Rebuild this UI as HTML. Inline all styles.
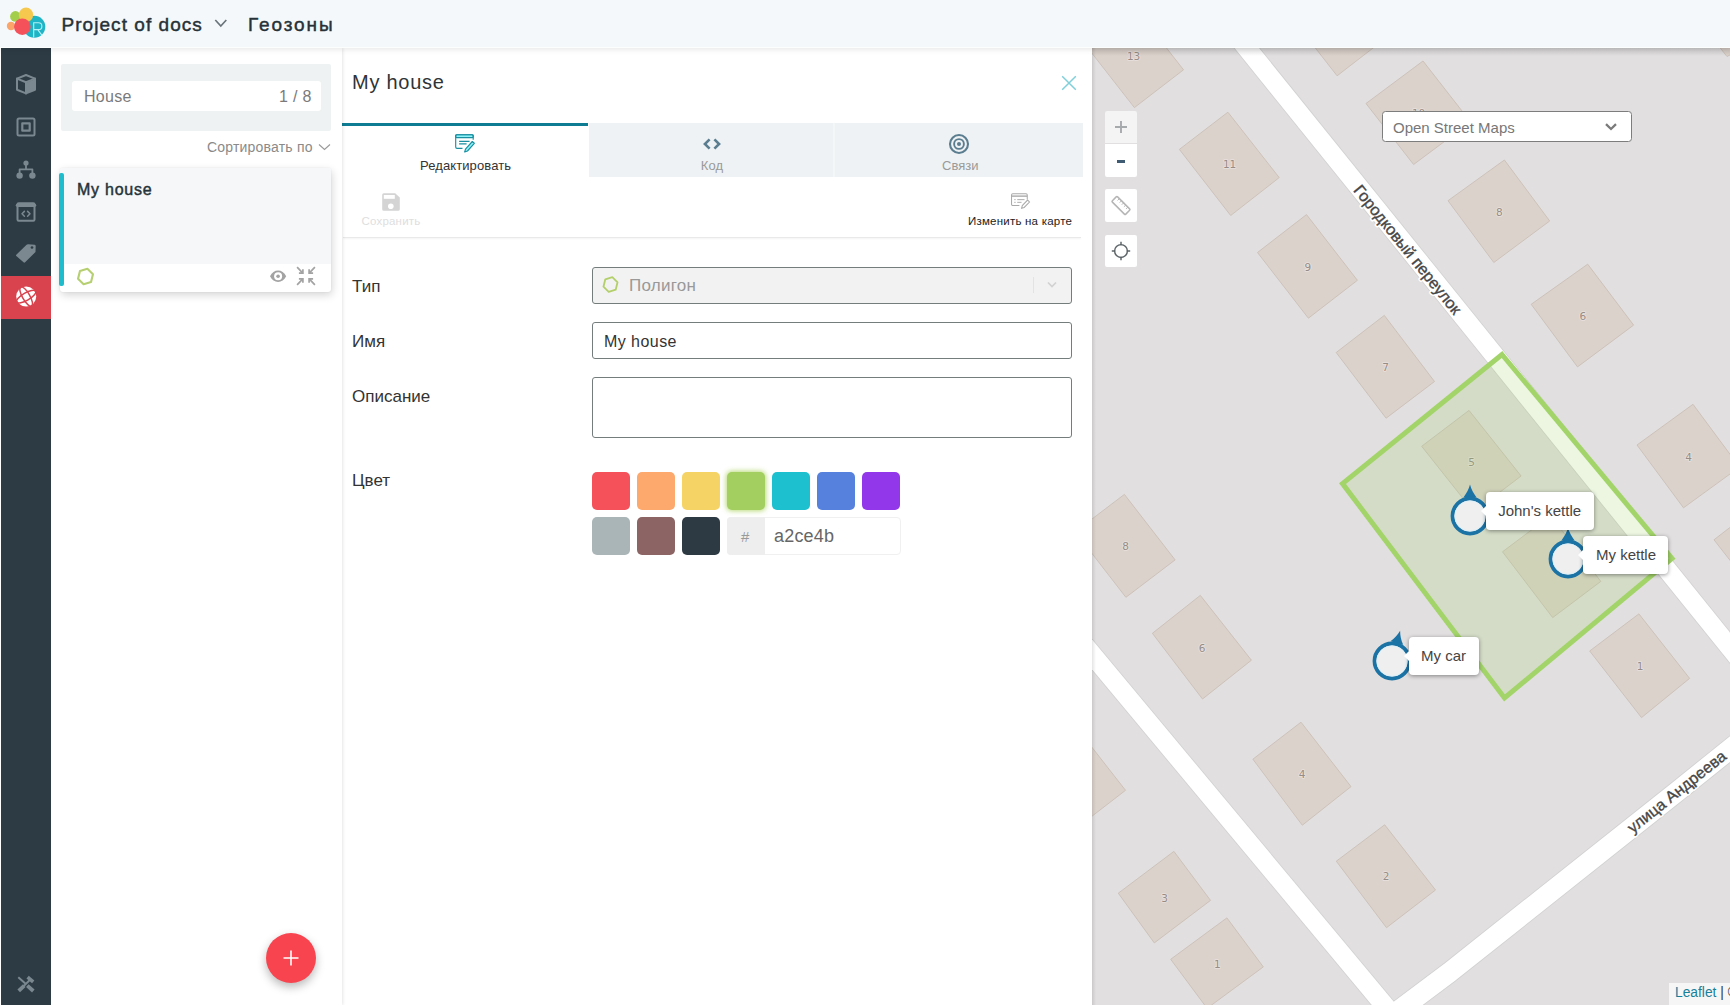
<!DOCTYPE html>
<html lang="ru">
<head>
<meta charset="utf-8">
<title>Геозоны</title>
<style>
*{box-sizing:border-box;margin:0;padding:0}
html,body{width:1730px;height:1005px;overflow:hidden;background:#fff}
body{position:relative;font-family:"Liberation Sans","DejaVu Sans",sans-serif;color:#263238}
.abs{position:absolute}
.t{position:absolute;white-space:nowrap;line-height:1}
.sb{font-weight:normal;-webkit-text-stroke:.45px currentColor}
/* header */
#hdr{position:absolute;left:0;top:0;width:1730px;height:48px;background:#f5f8fa;border-bottom:1px solid #fcfdfd;box-shadow:0 1px 6px rgba(0,0,0,.11);z-index:20}
/* sidebar */
#side{position:absolute;left:1px;top:48px;width:50px;height:957px;background:#2d3b45;z-index:5}
#side .act{position:absolute;left:0;top:228px;width:50px;height:42.500px;background:#d8434e}
/* list panel */
#list{position:absolute;left:51px;top:48px;width:291px;height:957px;background:#fff;z-index:4;box-shadow:1px 0 3px rgba(0,0,0,.10)}
/* detail */
#det{position:absolute;left:343px;top:48px;width:749px;height:957px;background:#fff;z-index:3}
.sw{position:absolute;width:38px;height:38px;border-radius:5px}
.tip{background:#fff;border-radius:4px;box-shadow:0 1px 4px rgba(0,0,0,.42)}
.tip:before{content:"";position:absolute;left:-5px;top:50%;margin-top:-5px;border:5px solid transparent;border-left:0;border-right-color:#fff}
/* map */
#map{position:absolute;left:1092px;top:48px;width:638px;height:957px;background:#e1dfdf;overflow:hidden;z-index:2}
</style>
</head>
<body>
<div id="hdr">
<svg class="abs" style="left:4px;top:4px" width="46" height="40" viewBox="4 4 46 40">
<circle cx="15.400" cy="16.400" r="5.300" fill="#a2ce4b"/>
<circle cx="11" cy="26" r="4.200" fill="#fba56a"/>
<circle cx="34.300" cy="26.800" r="11" fill="#1fb4c6"/>
<circle cx="26" cy="14.800" r="7.200" fill="#f7c84e"/>
<circle cx="22.300" cy="26.700" r="8.300" fill="#f5515b"/>
<path d="M33.700 37.600V22.800h4.800a3.400 3.400 0 0 1 0 6.800h-4.800m4 0l4.300 5.800" fill="none" stroke="#b4f1f6" stroke-width="1.100"/>
</svg>
<div class="t sb" id="h1" style="left:61.500px;top:15px;font-size:19px;color:#263238;letter-spacing:1.05px">Project of docs</div>
<svg class="abs" style="left:213px;top:18px" width="16" height="11" viewBox="0 0 16 11"><path d="M2.300 2l5.500 6 5.500-6" fill="none" stroke="#69747b" stroke-width="1.700"/></svg>
<div class="t sb" id="h2" style="left:248px;top:15px;font-size:19px;color:#263238;letter-spacing:1.9px">Геозоны</div>
</div>
<div id="side"><div class="act"></div>
<!-- icons: coordinates relative to sidebar (x-1, y-48) -->
<svg class="abs" style="left:0;top:0" width="50" height="957" viewBox="1 48 50 957" fill="none" stroke="#7b8890" stroke-width="2" stroke-linejoin="round" stroke-linecap="round">
<!-- cube -->
<g>
<path d="M26 75l9 3.6v11.2L26 93.4l-9-3.6V78.6z" />
<path d="M17 78.6l9 3.6 9-3.6M26 82.2v11.2"/>
<path d="M26.9 82.6l8.1-3.3v10.4l-8.1 3.2z" fill="#7b8890" stroke="none"/>
</g>
<!-- square in square -->
<rect x="17.5" y="118.5" width="17" height="17" rx="1.5"/>
<rect x="22.3" y="123.3" width="7.4" height="7.4" stroke-width="2.2"/>
<!-- sitemap -->
<g>
<circle cx="26" cy="163" r="2.6" fill="#7b8890" stroke="none"/>
<circle cx="19.6" cy="175.6" r="3.2" fill="#7b8890" stroke="none"/>
<circle cx="32.4" cy="175.6" r="3.2" fill="#7b8890" stroke="none"/>
<path d="M26 164v5.4M19.6 174v-4.6h12.8V174" stroke-width="1.8"/>
</g>
<!-- code window -->
<g>
<rect x="17.5" y="203.3" width="17" height="17.4" rx="1.2"/>
<path d="M17.5 205.300h17" stroke-width="3.400"/>
<path d="M24.4 211.4l-2.4 2.4 2.4 2.4M27.6 211.4l2.4 2.4-2.4 2.4" stroke-width="1.5"/>
</g>
<!-- tag -->
<g>
<path d="M16.300 254.800L26.600 244.700c.5-.4 1-.6 1.700-.5l6.400.6c.7.100 1 .5 1 1.200l-.2 6L25.100 262.300c-.5.500-1.100.5-1.600 0L16.300 256c-.4-.4-.4-.8 0-1.200z" fill="#7b8890" stroke="none"/>
<circle cx="32" cy="247.500" r="1.350" fill="#2d3b45" stroke="none"/>
</g>
<!-- globe -->
<g stroke="#d8434e" stroke-width="1.500">
<circle cx="26.200" cy="296.600" r="10" fill="#fff" stroke="none"/>
<g transform="rotate(-30 26.200 296.600)">
<ellipse cx="26.200" cy="296.600" rx="3.700" ry="11"/>
<ellipse cx="26.200" cy="296.600" rx="11" ry="3.700"/>
</g>
</g>
<!-- tools -->
<g stroke="#7b8890" stroke-linecap="butt">
<path d="M18.300 977.300L25.600 983.700" stroke-width="2"/>
<path d="M27.300 985.700L33.300 991" stroke-width="3.800"/>
<path d="M18.700 990.800L24.300 985.600" stroke-width="3.800"/>
<path d="M24 985.900L30 979.800" stroke-width="2"/>
<path d="M27.600 977.200L33.200 981.800" stroke-width="3.600"/>
</g>
</svg>
</div>
<div id="list">
<!-- coords relative to list (x-51,y-48) -->
<div class="abs" style="left:10px;top:15.500px;width:270px;height:67.500px;background:#eff2f3;border-radius:2px"></div>
<div class="abs" style="left:21px;top:33px;width:249px;height:30px;background:#fff;border-radius:3px"></div>
<div class="t" id="l1" style="left:33px;top:41px;font-size:16px;color:#7a7a7a;letter-spacing:.3px">House</div>
<div class="t" id="l2" style="left:228px;top:41px;font-size:16px;color:#7a7a7a;letter-spacing:.3px">1 / 8</div>
<div class="t" id="l3" style="left:156px;top:92px;font-size:14px;color:#8a8a8a;letter-spacing:.2px">Сортировать по</div>
<svg class="abs" style="left:267px;top:95px" width="13" height="8" viewBox="0 0 13 8"><path d="M1 1.5l5.5 5 5.5-5" fill="none" stroke="#9a9a9a" stroke-width="1.1"/></svg>
<!-- card -->
<div class="abs" style="left:9px;top:120px;width:271px;height:124px;background:#fff;border-radius:3px;box-shadow:1px 3px 8px rgba(0,0,0,.17),0 0 2px rgba(0,0,0,.07)"></div>
<div class="abs" style="left:9px;top:120px;width:271px;height:96px;background:#f5f7f9;border-radius:3px 3px 0 0"></div>
<div class="abs" style="left:8px;top:125px;width:5px;height:113px;background:#1fbccd;border-radius:2px"></div>
<div class="t sb" id="l4" style="left:26px;top:134px;font-size:16px;color:#263238;letter-spacing:.75px">My house</div>
<svg class="abs" style="left:25px;top:219px" width="19" height="19" viewBox="0 0 19 19"><path d="M9.5 1.6l6.7 3.9v8L9.5 17.4 2.8 13.5v-8z" transform="rotate(14 9.5 9.5)" fill="none" stroke="#b6cf70" stroke-width="2.100" stroke-linejoin="round"/></svg>
<!-- eye -->
<svg class="abs" style="left:218px;top:221px" width="18" height="14" viewBox="-9 -7 18 14"><path d="M-8.100 0C-6.200 -3.700 -3.300 -5.700 0 -5.700S6.200 -3.700 8.100 0C6.200 3.700 3.300 5.700 0 5.700S-6.200 3.700 -8.100 0z" fill="#a3a3a3" transform="translate(.1 .3)"/><circle cx=".1" cy=".3" r="4" fill="#fff"/><circle cx=".1" cy=".3" r="1.800" fill="#a3a3a3"/></svg>
<!-- collapse -->
<svg class="abs" style="left:244.400px;top:217.300px" width="22" height="22" viewBox="-11 -11 22 22" fill="none" stroke="#a3a3a3" stroke-width="1.700"><path d="M-8.900 -8.800L-3.200 -2.900M-7.100 -2.800H-3.100V-6.800M8.900 -8.800L3.200 -2.900M7.100 -2.800H3.100V-6.800M-8.900 8.800L-3.200 2.900M-7.100 2.800H-3.100V6.800M8.900 8.800L3.200 2.900M7.100 2.800H3.100V6.800"/></svg>
<!-- fab -->
<div class="abs" style="left:215px;top:885px;width:50px;height:50px;border-radius:50%;background:#f8444f;box-shadow:0 4px 10px rgba(0,0,0,.28)"></div>
<svg class="abs" style="left:231px;top:901px" width="18" height="18" viewBox="0 0 18 18"><path d="M9 1.500v15M1.500 9h15" stroke="#fff" stroke-width="1.6" fill="none"/></svg>
</div>
<div id="det">
<!-- coords relative to det (x-343,y-48) -->
<div class="t" id="d1" style="left:9px;top:24px;font-size:20px;color:#303436;letter-spacing:.75px">My house</div>
<svg class="abs" style="left:718px;top:27px" width="16" height="16" viewBox="0 0 16 16"><path d="M1.200 1.200l13.600 13.600M14.800 1.200L1.200 14.800" stroke="#7fd0da" stroke-width="1.5" fill="none"/></svg>
<!-- tabs -->
<div class="abs" style="left:246px;top:75px;width:494px;height:54px;background:#eef2f4"></div>
<div class="abs" style="left:490px;top:75px;width:2px;height:54px;background:#f4f7f8"></div>
<div class="abs" style="left:-1px;top:75px;width:246px;height:3px;background:#0e7c93"></div>
<!-- edit icon -->
<svg class="abs" style="left:109px;top:83px" width="26" height="24" viewBox="452 131 26 24" fill="none" stroke="#1b8fa0" stroke-width="1.150" stroke-linejoin="round">
<rect x="455.700" y="134.700" width="17.500" height="2.900" rx=".8" fill="#8ef4fa"/>
<path d="M462.500 148.300H457a1.300 1.300 0 0 1-1.300-1.300V136a1.300 1.300 0 0 1 1.300-1.300H471.900a1.300 1.300 0 0 1 1.300 1.300V139.700"/>
<path d="M459.100 141.400H469.600M459.100 143.900H466.600" stroke-width="1.100"/>
<path d="M464.700 152L465.500 149.200L472.300 141.500L474.300 143.300L467.500 151z" fill="#8ef4fa"/>
</svg>
<div class="t" id="d2" style="left:77px;top:111px;font-size:13px;color:#333;letter-spacing:.1px">Редактировать</div>
<!-- code icon -->
<svg class="abs" style="left:359px;top:89px" width="20" height="14" viewBox="0 0 20 14" fill="none" stroke="#5b7d90" stroke-width="2.600"><path d="M7.600 2.300L2.900 7l4.700 4.700M12.400 2.300L17.100 7l-4.700 4.700"/></svg>
<div class="t" id="d3" style="left:357.700px;top:111px;font-size:13px;color:#9a9a9a;letter-spacing:.2px">Код</div>
<!-- links icon -->
<svg class="abs" style="left:605px;top:85px" width="22" height="22" viewBox="0 0 22 22" fill="none" stroke="#5b7d90"><circle cx="11" cy="11" r="9" stroke-width="2.100"/><circle cx="11" cy="11" r="4.900" stroke-width="1.900"/><circle cx="11" cy="11" r="2" fill="#5b7d90" stroke="none"/></svg>
<div class="t" id="d4" style="left:599px;top:111px;font-size:13px;color:#9a9a9a;letter-spacing:0">Связи</div>
<!-- toolbar -->
<svg class="abs" style="left:39px;top:145px" width="18" height="18" viewBox="0 0 18 18"><path d="M1.700 .2h11.500l4.600 4.400V16.300a1.500 1.500 0 0 1-1.500 1.500H1.700a1.500 1.500 0 0 1-1.500-1.500V1.700a1.500 1.500 0 0 1 1.500-1.500z" fill="#d4d4d4"/><rect x="1.800" y="2" width="11" height="3.800" fill="#fff"/><circle cx="8.800" cy="13.300" r="2.800" fill="#fff"/></svg>
<div class="t" id="d5" style="left:18.500px;top:168px;font-size:11.500px;color:#dedede;letter-spacing:.2px">Сохранить</div>
<svg class="abs" style="left:667px;top:144px" width="20.500" height="19.300" viewBox="0 0 24 22" preserveAspectRatio="none" fill="none" stroke="#aaa" stroke-width="1.200">
<path d="M11 15.500H3.200a1.400 1.400 0 0 1-1.400-1.400V3.400A1.400 1.400 0 0 1 3.200 2h15.600a1.400 1.400 0 0 1 1.400 1.400v5.200"/>
<path d="M1.800 4.700h18.400" stroke-width="1.600"/>
<path d="M5 8.700h1.600M8.500 8.700h8.500M5 11.800h1.600M8.500 11.800h5" stroke-width="1.100"/>
<path d="M13.600 18.400l.8-3 6.200-6.200 2.200 2.200-6.200 6.200z"/>
</svg>
<div class="t" id="d6" style="left:625px;top:168px;font-size:11.500px;color:#222;letter-spacing:.22px">Изменить на карте</div>
<div class="abs" style="left:0;top:189px;width:738px;height:1px;background:#e9e9e9;box-shadow:0 1px 2px rgba(0,0,0,.07)"></div>
<!-- form -->
<div class="t" id="f1" style="left:9px;top:230px;font-size:17px;color:#333;letter-spacing:0">Тип</div>
<div class="abs" style="left:249px;top:219px;width:480px;height:37px;border:1px solid #747c7c;border-radius:3px;background:#f2f2f2"></div>
<svg class="abs" style="left:258px;top:227px" width="19" height="19" viewBox="0 0 19 19"><path d="M9.500 2l6.300 3.700v7.600L9.500 17l-6.300-3.700V5.700z" transform="rotate(14 9.500 9.500)" fill="none" stroke="#b3cf6a" stroke-width="1.800" stroke-linejoin="round"/></svg>
<div class="t" id="f2" style="left:286px;top:229px;font-size:17px;color:#999;letter-spacing:.25px">Полигон</div>
<div class="abs" style="left:690px;top:229px;width:1px;height:16px;background:#e3e3e3"></div>
<svg class="abs" style="left:703.200px;top:233px" width="12" height="8" viewBox="0 0 12 8"><path d="M2 1.500l4 4 4-4" fill="none" stroke="#d2d2d2" stroke-width="1.700"/></svg>
<div class="t" id="f3" style="left:9px;top:285px;font-size:17px;color:#333;letter-spacing:0">Имя</div>
<div class="abs" style="left:249px;top:274px;width:480px;height:37px;border:1px solid #747c7c;border-radius:3px;background:#fff"></div>
<div class="t" id="f4" style="left:261px;top:286px;font-size:16px;color:#333;letter-spacing:.45px">My house</div>
<div class="t" id="f5" style="left:9px;top:340px;font-size:17px;color:#333;letter-spacing:0">Описание</div>
<div class="abs" style="left:249px;top:329px;width:480px;height:61px;border:1px solid #747c7c;border-radius:3px;background:#fff"></div>
<div class="t" id="f6" style="left:9px;top:424px;font-size:17px;color:#333;letter-spacing:0">Цвет</div>
<!-- swatches -->
<div class="sw" style="left:249px;top:424px;background:#f5515b"></div>
<div class="sw" style="left:294px;top:424px;background:#fda96d"></div>
<div class="sw" style="left:339px;top:424px;background:#f6d365"></div>
<div class="sw" style="left:384px;top:424px;background:#a2cf60;box-shadow:0 0 5px 1px rgba(162,206,75,.75)"></div>
<div class="sw" style="left:429px;top:424px;background:#1cc0cf"></div>
<div class="sw" style="left:474px;top:424px;background:#5682de"></div>
<div class="sw" style="left:519px;top:424px;background:#9238ea"></div>
<div class="sw" style="left:249px;top:469px;background:#a9b5b7"></div>
<div class="sw" style="left:294px;top:469px;background:#8d6464"></div>
<div class="sw" style="left:339px;top:469px;background:#2d3a44"></div>
<div class="abs" style="left:384px;top:469px;width:174px;height:38px;border:1px solid #f0f0f0;border-radius:4px;background:#fff"></div>
<div class="abs" style="left:384px;top:469px;width:38px;height:38px;border-radius:4px 0 0 4px;background:#eeeeee"></div>
<div class="t" id="f7" style="left:398px;top:481px;font-size:15px;color:#999">#</div>
<div class="t" id="f8" style="left:431px;top:479px;font-size:18px;color:#666;letter-spacing:.2px">a2ce4b</div>
</div>
<div id="map">
<!--MAPSVG--><svg class="abs" style="left:0;top:0" width="638" height="957" viewBox="1092 48 638 957">
<path d="M1234.0 32.1L1745.0 666.3" stroke="#d2d1d1" stroke-width="20.6" fill="none" stroke-linejoin="round"/>
<path d="M1080.0 640.0L1400.0 1024.0" stroke="#d2d1d1" stroke-width="20.6" fill="none" stroke-linejoin="round"/>
<path d="M1380.0 1024.5L1450.0 972.0L1676.0 792.5L1745.0 737.0" stroke="#d2d1d1" stroke-width="21.6" fill="none" stroke-linejoin="round"/>
<path d="M1234.0 32.1L1745.0 666.3" stroke="#fff" stroke-width="19.0" fill="none" stroke-linejoin="round"/>
<path d="M1080.0 640.0L1400.0 1024.0" stroke="#fff" stroke-width="19.0" fill="none" stroke-linejoin="round"/>
<path d="M1380.0 1024.5L1450.0 972.0L1676.0 792.5L1745.0 737.0" stroke="#fff" stroke-width="20.0" fill="none" stroke-linejoin="round"/>
<g fill="#dcd2cc" stroke="#cdc2ba" stroke-width="1">
<path d="M1132.2 4.1L1183.5 69.8L1134.4 107.6L1083.1 41.9z"/>
<path d="M1227.9 112.2L1279.2 177.6L1230.7 215.5L1179.4 149.4z"/>
<path d="M1306.5 214.6L1357.4 280.3L1308.4 318.2L1257.5 252.5z"/>
<path d="M1384.3 315.4L1434.5 381.5L1386.1 418.2L1336.2 352.5z"/>
<path d="M1334.3 -27.4L1385.6 38.3L1337.1 75.8L1285.8 10.1z"/>
<path d="M1423.0 61.0L1470.6 122.0L1413.6 164.5L1366.0 103.5z"/>
<path d="M1504.4 160.0L1549.7 221.0L1493.8 262.5L1448.0 200.7z"/>
<path d="M1587.7 264.2L1633.6 325.1L1577.5 366.9L1531.2 304.3z"/>
<path d="M1693.0 404.3L1739.5 467.1L1683.5 507.8L1637.0 445.0z"/>
<path d="M1469.0 410.4L1521.1 476.0L1473.8 512.0L1421.7 446.3z"/>
<path d="M1550.6 515.6L1600.8 581.4L1552.7 617.6L1502.5 551.8z"/>
<path d="M1124.4 494.4L1175.1 559.9L1125.9 597.3L1075.2 531.8z"/>
<path d="M1200.3 595.4L1251.4 660.2L1202.5 699.0L1152.4 633.3z"/>
<path d="M1638.9 613.9L1689.6 678.4L1641.5 717.6L1589.7 651.0z"/>
<path d="M1762.5 502.3L1813.0 568.0L1765.3 605.5L1714.0 539.8z"/>
<path d="M1301.0 722.2L1351.0 786.6L1302.3 825.2L1252.9 759.2z"/>
<path d="M1384.7 824.8L1435.5 890.0L1386.5 927.7L1336.3 861.2z"/>
<path d="M1173.9 851.4L1210.5 900.4L1154.3 942.9L1118.3 893.2z"/>
<path d="M1226.9 917.9L1263.3 966.9L1207.1 1008.3L1170.7 959.3z"/>
<path d="M1727.0 56.5L1719.5 47.0L1730.0 40.0L1745.0 47.0z"/>
<path d="M1074.2 724.6L1125.5 790.3L1077.0 827.8L1025.7 762.1z"/>
</g>
<g font-family="'DejaVu Sans','Liberation Sans',sans-serif" font-size="10.5" fill="#978c86" stroke="#efe9e5" stroke-opacity=".7" stroke-width="1.600" paint-order="stroke" stroke-linejoin="round" text-anchor="middle">
<text x="1133.6" y="60.3">13</text>
<text x="1229.6" y="168.2">11</text>
<text x="1307.8" y="270.9">9</text>
<text x="1385.6" y="371.4">7</text>
<text x="1418.6" y="117.2">10</text>
<text x="1499.3" y="215.6">8</text>
<text x="1582.8" y="319.6">6</text>
<text x="1688.5" y="460.6">4</text>
<text x="1471.7" y="465.7">5</text>
<text x="1125.5" y="550.3">8</text>
<text x="1202.0" y="651.5">6</text>
<text x="1640.2" y="669.7">1</text>
<text x="1302.1" y="777.8">4</text>
<text x="1386.0" y="880.4">2</text>
<text x="1164.5" y="901.5">3</text>
<text x="1217.3" y="967.6">1</text>
</g>
<g font-family="'Liberation Sans','DejaVu Sans',sans-serif" font-size="16" fill="#464646" stroke="#464646" stroke-width=".35" text-anchor="middle">
<text transform="translate(1407.5 249.7) rotate(51.1)" x="0" y="5.4" stroke="#fff" stroke-width="3.4" stroke-linejoin="round" fill="#fff" aria-hidden="true">Городковый переулок</text>
<text id="rl1" transform="translate(1407.5 249.7) rotate(51.1)" x="0" y="5.4">Городковый переулок</text>
<text transform="translate(1676.7 791.8) rotate(-38.6)" x="0" y="5.4" stroke="#fff" stroke-width="3.4" stroke-linejoin="round" fill="#fff" aria-hidden="true">улица Андреева</text>
<text id="rl2" transform="translate(1676.7 791.8) rotate(-38.6)" x="0" y="5.4">улица Андреева</text>
</g>
<path d="M1502 354.5L1672 558.5L1504.5 698L1342.5 483.6z" fill="#a0d468" fill-opacity=".2" stroke="#a2d469" stroke-width="5" stroke-linejoin="miter"/>
</svg><!--/MAPSVG-->
<!--MAPUI-->
<div class="abs" style="left:0;top:0;width:638px;height:8px;background:linear-gradient(rgba(0,0,0,.12),rgba(0,0,0,0))"></div>
<div class="abs" style="left:0;top:0;width:4px;height:957px;background:linear-gradient(90deg,rgba(0,0,0,.10),rgba(0,0,0,0))"></div>
<div class="abs" style="left:13px;top:63px;width:32px;height:32px;background:#f4f4f4;border-radius:2px 2px 0 0"></div>
<svg class="abs" style="left:13px;top:63px" width="32" height="32" viewBox="0 0 32 32"><path d="M16 10v12M10 16h12" stroke="#a6aaad" stroke-width="1.900" fill="none"/></svg>
<div class="abs" style="left:13px;top:96px;width:32px;height:33px;background:#fff;border-radius:0 0 2px 2px"></div>
<div class="abs" style="left:25px;top:112px;width:8px;height:3px;background:#3f5a73"></div>
<div class="abs" style="left:13px;top:141px;width:32px;height:33px;background:#fff;border-radius:2px"></div>
<svg class="abs" style="left:13px;top:141px" width="32" height="33" viewBox="0 0 32 33"><g transform="rotate(45 16 16.500)" fill="none" stroke="#b5b5b5"><rect x="6.500" y="12.800" width="19" height="7.400" rx="1" stroke-width="1.500"/><path d="M10 12.800v2.600M13 12.800v2.600M16 12.800v2.600M19 12.800v2.600M22 12.800v2.600" stroke-width=".9"/></g></svg>
<div class="abs" style="left:13px;top:187px;width:32px;height:32px;background:#fff;border-radius:2px"></div>
<svg class="abs" style="left:13px;top:187px" width="32" height="32" viewBox="0 0 32 32" fill="none" stroke="#5d6468" stroke-width="1.450"><circle cx="16" cy="16" r="6.400"/><path d="M16 6.800v3.400M16 21.800v3.400M6.800 16h3.400M21.800 16h3.400"/></svg>
<div class="abs" style="left:290px;top:63px;width:250px;height:31px;background:#fff;border:1.500px solid #7d7d7d;border-radius:3.500px"></div>
<div class="t" id="m1" style="left:301px;top:72px;font-size:15px;color:#777">Open Street Maps</div>
<svg class="abs" style="left:512px;top:74px" width="14" height="10" viewBox="0 0 14 10"><path d="M2 2.200l5 4.800 5-4.800" fill="none" stroke="#7a7a7a" stroke-width="2.300"/></svg>
<svg class="abs" style="left:356.3px;top:434.3px" width="44" height="58" viewBox="-22 -34 44 58"><g transform="rotate(0)"><path d="M0 -31.400C-1.300 -26.500 -3.400 -22.500 -6.600 -18.600L6.600 -18.600C3.400 -22.500 1.300 -26.500 0 -31.400z" fill="#1b72a5"/></g><circle cx="0" cy="0" r="17.500" fill="#efefef" stroke="#1b72a5" stroke-width="3.800"/><circle cx="0" cy="0" r="15.100" fill="none" stroke="#dcf0f9" stroke-width="1"/></svg>
<svg class="abs" style="left:453.8px;top:477.2px" width="44" height="58" viewBox="-22 -34 44 58"><g transform="rotate(0)"><path d="M0 -31.400C-1.300 -26.500 -3.400 -22.500 -6.600 -18.600L6.600 -18.600C3.400 -22.500 1.300 -26.500 0 -31.400z" fill="#1b72a5"/></g><circle cx="0" cy="0" r="17.500" fill="#efefef" stroke="#1b72a5" stroke-width="3.800"/><circle cx="0" cy="0" r="15.100" fill="none" stroke="#dcf0f9" stroke-width="1"/></svg>
<svg class="abs" style="left:277.7px;top:578.8px" width="44" height="58" viewBox="-22 -34 44 58"><g transform="rotate(15)"><path d="M0 -31.400C-1.300 -26.500 -3.400 -22.500 -6.600 -18.600L6.600 -18.600C3.400 -22.500 1.300 -26.500 0 -31.400z" fill="#1b72a5"/></g><circle cx="0" cy="0" r="17.500" fill="#efefef" stroke="#1b72a5" stroke-width="3.800"/><circle cx="0" cy="0" r="15.100" fill="none" stroke="#dcf0f9" stroke-width="1"/></svg>
<div class="abs tip" style="left:394.0px;top:444.0px;width:108.0px;height:37.5px"></div><div class="t" id="t1" style="left:406.2px;top:454.5px;font-size:15px;color:#444">John's kettle</div>
<div class="abs tip" style="left:491.0px;top:488.0px;width:85.0px;height:37.5px"></div><div class="t" id="t2" style="left:504.0px;top:498.5px;font-size:15px;color:#444">My kettle</div>
<div class="abs tip" style="left:316.5px;top:589.0px;width:70.0px;height:37.5px"></div><div class="t" id="t3" style="left:329.0px;top:599.5px;font-size:15px;color:#444">My car</div>
<div class="abs" style="left:577px;top:935px;width:70px;height:22px;background:rgba(255,255,255,.72)"></div>
<div class="t" id="m2" style="left:583px;top:938px;font-size:13.800px;color:#333"><span style="color:#17809a">Leaflet</span> | © OpenStreetMap</div>
<!--/MAPUI-->
</div>
</body>
</html>
